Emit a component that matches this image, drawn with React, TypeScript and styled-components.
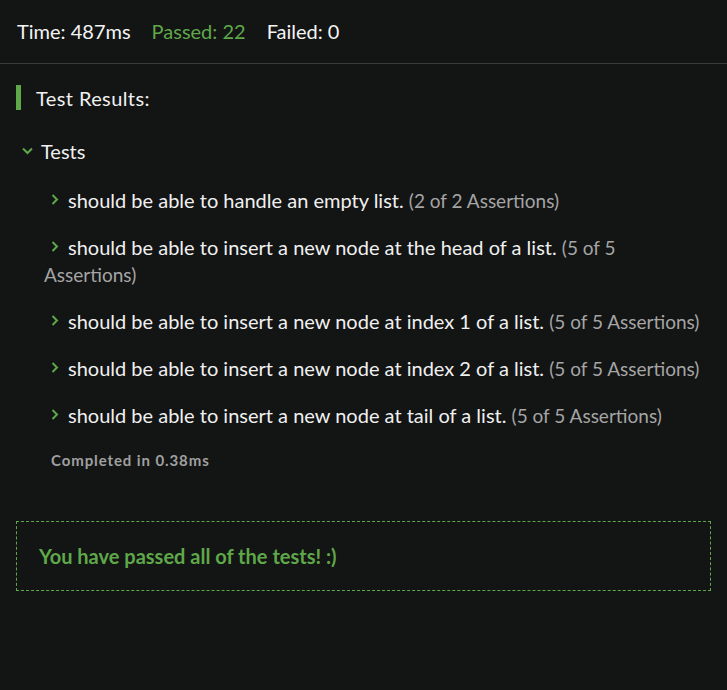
import React from 'react';
import styled, { createGlobalStyle } from 'styled-components';

const GlobalStyle = createGlobalStyle`
  html, body {
    margin: 0;
    padding: 0;
    background: #131414;
  }
  body {
    font-family: Lato, "Open Sans", sans-serif;
    color: #f0f0f0;
  }
`;

const Wrapper = styled.div`
  width: 727px;
  min-height: 690px;
  background: #131414;
`;

const StatsBar = styled.div`
  display: flex;
  align-items: center;
  gap: 21px;
  height: 64px;
  padding: 0 17px 2px;
  box-sizing: border-box;
  border-bottom: 1px solid #3a3b3b;
  font-size: 20px;
`;

const Stat = styled.span<{ $pass?: boolean }>`
  color: ${(p) => (p.$pass ? '#5fa84a' : '#f4f4f4')};
`;

const Body = styled.div`
  padding: 21px 16px 0;
`;

const Heading = styled.div`
  display: flex;
  align-items: center;
  height: 25px;
  padding-left: 15px;
  border-left: 5px solid #5fa84a;
  font-size: 20px;
  letter-spacing: 0.4px;
`;

const Suite = styled.div`
  margin-top: 28px;
`;

const SuiteTitle = styled.div`
  display: flex;
  align-items: center;
  gap: 8px;
  padding-left: 6px;
  font-size: 20px;
  height: 26px;
`;

const TestList = styled.ul`
  list-style: none;
  margin: 13px 0 0;
  padding: 0 0 0 28px;
`;

const TestItem = styled.li`
  font-size: 20px;
  line-height: 27px;
  padding: 10px 0 10px;
`;

const Chevron = styled.span`
  display: inline-block;
  width: 17px;
  margin-left: 7px;
  vertical-align: 3px;
  line-height: 11px;
`;

const Assertions = styled.span`
  color: #a5a5a5;
  font-size: 19px;
`;

const Completed = styled.div`
  padding-left: 35px;
  margin-top: 12px;
  font-size: 15px;
  font-weight: 700;
  letter-spacing: 0.9px;
  color: #a0a0a0;
`;

const PassBox = styled.div`
  margin: 52px 0 0;
  height: 70px;
  display: flex;
  align-items: center;
  padding-left: 22px;
  box-sizing: border-box;
  border: 1px dashed #5fa84a;
  color: #5fa84a;
  font-size: 20px;
  font-weight: 700;
`;

const ChevronRight = () => (
  <svg width="8" height="11" viewBox="0 0 8 11">
    <path d="M1.5 1 L6 5.5 L1.5 10" fill="none" stroke="#5fa84a" strokeWidth="2" />
  </svg>
);

const ChevronDown = () => (
  <svg width="11" height="8" viewBox="0 0 11 8">
    <path d="M1 1.5 L5.5 6 L10 1.5" fill="none" stroke="#5fa84a" strokeWidth="2" />
  </svg>
);

const tests = [
  { name: 'should be able to handle an empty list.', passed: 2, total: 2 },
  { name: 'should be able to insert a new node at the head of a list.', passed: 5, total: 5 },
  { name: 'should be able to insert a new node at index 1 of a list.', passed: 5, total: 5 },
  { name: 'should be able to insert a new node at index 2 of a list.', passed: 5, total: 5 },
  { name: 'should be able to insert a new node at tail of a list.', passed: 5, total: 5 },
];

const App = () => {
  return (
    <Wrapper>
      <GlobalStyle />
      <StatsBar>
        <Stat>Time: 487ms</Stat>
        <Stat $pass>Passed: 22</Stat>
        <Stat>Failed: 0</Stat>
      </StatsBar>
      <Body>
        <Heading>Test Results:</Heading>
        <Suite>
          <SuiteTitle>
            <ChevronDown />
            Tests
          </SuiteTitle>
          <TestList>
            {tests.map((t) => (
              <TestItem key={t.name}>
                <Chevron>
                  <ChevronRight />
                </Chevron>
                {t.name}{' '}
                <Assertions>
                  ({t.passed} of {t.total} Assertions)
                </Assertions>
              </TestItem>
            ))}
          </TestList>
          <Completed>Completed in 0.38ms</Completed>
        </Suite>
        <PassBox>You have passed all of the tests! :)</PassBox>
      </Body>
    </Wrapper>
  );
};

export default App;
